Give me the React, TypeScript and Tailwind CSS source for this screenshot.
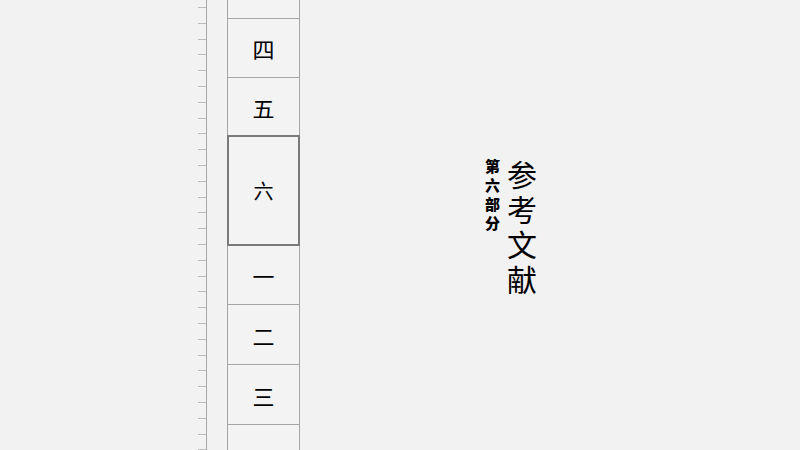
import React from "react";

const cells = [
  { label: "", h: 19 },
  { label: "四", h: 59 },
  { label: "五", h: 58 },
  { label: "六", h: 111, sel: true },
  { label: "一", h: 59 },
  { label: "二", h: 60 },
  { label: "三", h: 60 },
  { label: "", h: 40 },
];

export default function App() {
  const ticks = Array.from({ length: 29 });
  return (
    <div
      className="w-[800px] h-[450px] overflow-hidden bg-[#f2f2f2] flex"
      style={{ fontFamily: '"Noto Sans CJK SC", "Noto Sans", sans-serif' }}
    >
      <div className="w-[198px] shrink-0" />
      {/* ruler */}
      <div className="flex shrink-0">
        <div className="w-[8px] flex flex-col pt-[7px]">
          {ticks.map((_, i) => (
            <div key={i} className="h-[15.8px] shrink-0">
              <div className="h-px w-[8px] bg-[#bdbdbd]" />
            </div>
          ))}
        </div>
        <div className="w-px h-full bg-[#a8a8a8]" />
      </div>
      <div className="w-[20px] shrink-0" />
      {/* column */}
      <div className="w-[73px] shrink-0 border-x border-[#a6a6a6] bg-[#f3f3f3] flex flex-col">
        {cells.map((c, i) =>
          c.sel ? (
            <div
              key={i}
              style={{ height: c.h }}
              className="-mx-px -mt-px shrink-0 border-2 border-[#7a7a7a] flex items-center justify-center text-[20px] text-black"
            >
              {c.label}
            </div>
          ) : (
            <div
              key={i}
              style={{ height: c.h }}
              className="shrink-0 border-b border-[#a6a6a6] flex items-center justify-center text-[22px] text-black leading-none"
            >
              {c.label}
            </div>
          )
        )}
      </div>
      {/* title */}
      <div className="flex-1 flex items-start pl-[185px] pt-[156px] gap-[7px]">
        <div className="flex flex-col text-[15px] leading-[19px] font-black text-black">
          {"第六部分".split("").map((ch) => (
            <span key={ch}>{ch}</span>
          ))}
        </div>
        <div className="flex flex-col text-[30px] leading-[35px] text-black">
          {"参考文献".split("").map((ch) => (
            <span key={ch}>{ch}</span>
          ))}
        </div>
      </div>
    </div>
  );
}
